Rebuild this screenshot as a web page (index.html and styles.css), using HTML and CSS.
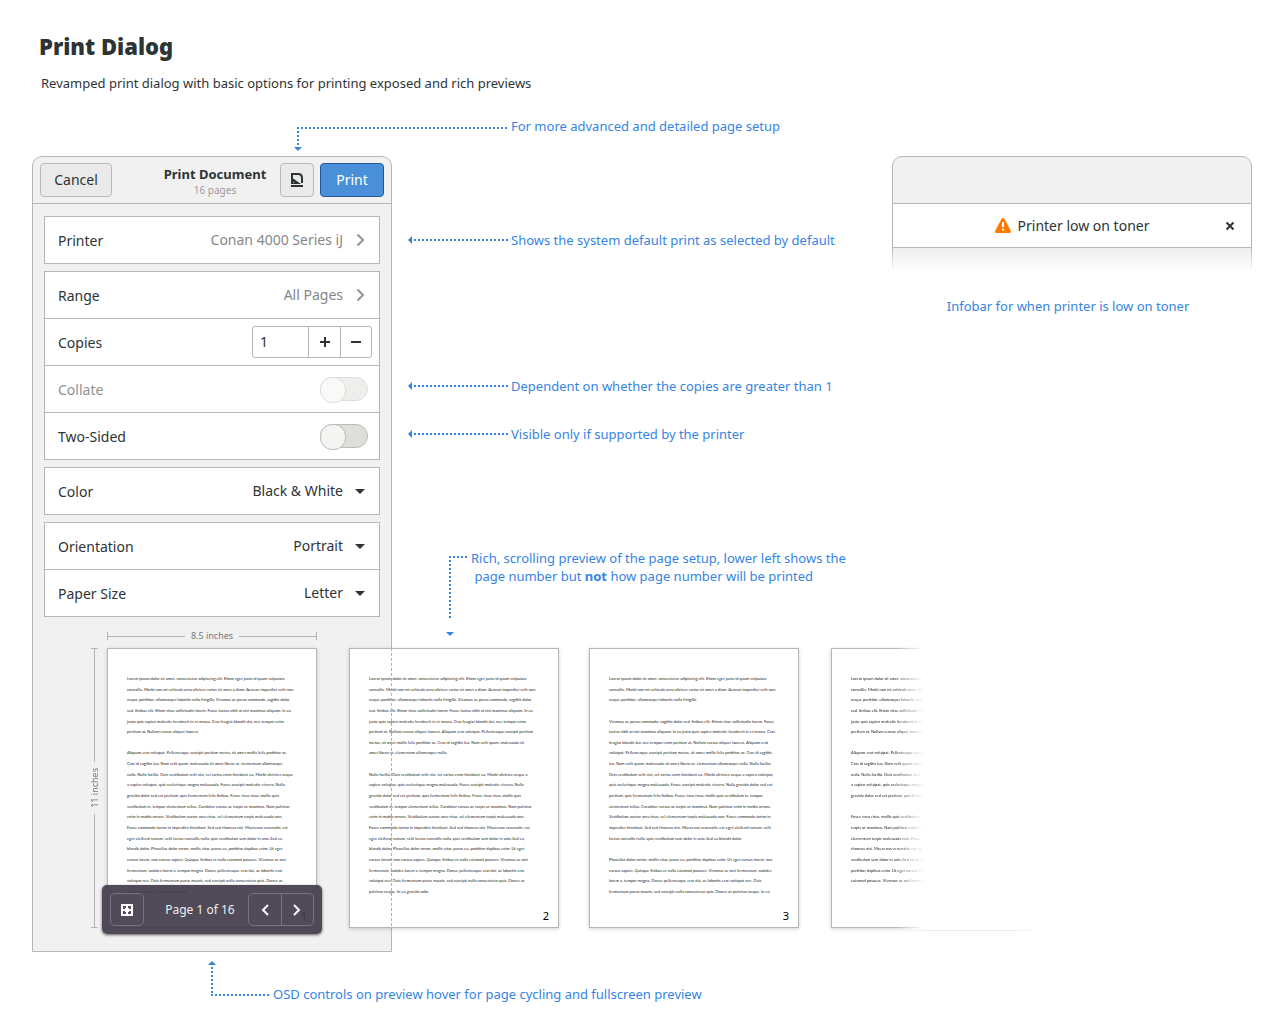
FILE: index.html
```html
<!DOCTYPE html>
<html lang="en">
<head>
<meta charset="utf-8">
<title>Print Dialog</title>
<link rel="stylesheet" href="styles.css">
</head>
<body>
<header class="intro">
  <h1 class="title">Print Dialog</h1>
  <p class="summary">Revamped print dialog with basic options for printing exposed and rich previews</p>
</header>

<div class="note note-top">
  <svg class="lead" width="214" height="26" viewBox="0 0 214 26"><path class="dots" d="M3 3H213M4 6V21"/><path class="tip" d="M0 22h8l-4 4z"/></svg>
  <p>For more advanced and detailed page setup</p>
</div>

<main class="board">
  <section class="dialog" aria-label="Print Document">
    <header class="bar">
      <button class="btn cancel" type="button">Cancel</button>
      <div class="heading">
        <h2>Print Document</h2>
        <p>16 pages</p>
      </div>
      <button class="btn setup" type="button" aria-label="Page setup">
        <svg width="16" height="16" viewBox="0 0 16 16"><path d="M3 6V2h6q4 0 4 4v5" fill="none" stroke="#2e3436" stroke-width="2"/><path d="M2 5l10 7H2zM2 13h12v2H2z" fill="#2e3436"/><path d="M4 9.500l1.500 1H4z" fill="#eaeaea"/></svg>
      </button>
      <button class="btn primary" type="button">Print</button>
    </header>

    <form class="options">
      <div class="group">
        <div class="row">
          <label for="printer">Printer</label>
          <button id="printer" class="link" type="button">Conan 4000 Series iJ
            <svg width="9" height="14" viewBox="0 0 9 14"><path d="M1.500 1.500L7 7l-5.500 5.500"/></svg></button>
        </div>
      </div>
      <div class="group">
        <div class="row">
          <label for="range">Range</label>
          <button id="range" class="link" type="button">All Pages
            <svg width="9" height="14" viewBox="0 0 9 14"><path d="M1.500 1.500L7 7l-5.500 5.500"/></svg></button>
        </div>
        <div class="row">
          <label for="copies">Copies</label>
          <div class="spin">
            <input id="copies" type="text" inputmode="numeric" value="1">
            <button type="button" aria-label="More copies"><svg width="10" height="10" viewBox="0 0 10 10"><path d="M4 0h2v4h4v2H6v4H4V6H0V4h4z"/></svg></button>
            <button type="button" aria-label="Fewer copies"><svg width="10" height="10" viewBox="0 0 10 10"><path d="M0 4h10v2H0z"/></svg></button>
          </div>
        </div>
        <div class="row off">
          <label for="collate">Collate</label>
          <input id="collate" class="switch" type="checkbox" disabled>
        </div>
        <div class="row">
          <label for="twosided">Two-Sided</label>
          <input id="twosided" class="switch" type="checkbox">
        </div>
      </div>
      <div class="group">
        <div class="row">
          <label for="color">Color</label>
          <div class="pick"><select id="color"><option>Black &amp; White</option><option>Color</option></select><svg width="10" height="5" viewBox="0 0 10 5"><path d="M0 0h10L5 5z"/></svg></div>
        </div>
      </div>
      <div class="group">
        <div class="row">
          <label for="orientation">Orientation</label>
          <div class="pick"><select id="orientation"><option>Portrait</option><option>Landscape</option></select><svg width="10" height="5" viewBox="0 0 10 5"><path d="M0 0h10L5 5z"/></svg></div>
        </div>
        <div class="row">
          <label for="paper">Paper Size</label>
          <div class="pick"><select id="paper"><option>Letter</option><option>A4</option></select><svg width="10" height="5" viewBox="0 0 10 5"><path d="M0 0h10L5 5z"/></svg></div>
        </div>
      </div>
    </form>

    <div class="preview">
      <div class="ruler wide"><span>8.5 inches</span></div>
      <div class="ruler tall"><span>11 inches</span></div>
      <div class="strip">
        <article class="page">
          <div class="copy">
            <span>Lorem ipsum dolor sit amet, consectetur adipiscing elit. Etiam eget justo id quam vulputate</span>
            <span>convallis. Morbi non mi vehicula urna ultrices varius sit amet a diam. Aenean imperdiet velit non</span>
            <span>neque porttitor, ullamcorper lobortis nulla fringilla. Vivamus ac purus commodo, sagittis dolor</span>
            <span>sed, finibus elit. Etiam vitae sollicitudin lorem. Fusce luctus nibh at nisi maximus aliquam. In eu</span>
            <span>justo quis sapien molestie hendrerit in et massa. Cras feugiat blandit dui, nec tempor enim</span>
            <span>pretium at. Nullam cursus aliquet laoreet.</span>
            <span></span>
            <span>Aliquam erat volutpat. Pellentesque suscipit pretium metus, sit amet mollis felis porttitor ac.</span>
            <span>Cras id sagittis leo. Nam velit quam, malesuada sit amet libero ut, elementum ullamcorper</span>
            <span>nulla. Nulla facilisi. Duis vestibulum velit nisi, vel varius enim tincidunt eu. Morbi ultricies neque</span>
            <span>a sapien volutpat, quis scelerisque magna malesuada. Fusce suscipit molestie viverra. Nulla</span>
            <span>gravida dolor sed est pretium, quis fermentum felis finibus. Fusce risus risus, mollis quis</span>
            <span>vestibulum in, tempor elementum tellus. Curabitur cursus ac turpis ut maximus. Nam pulvinar</span>
            <span>enim in mattis ornare. Vestibulum auctor arcu risus, vel elementum turpis malesuada non.</span>
            <span>Fusce commodo tortor in imperdiet tincidunt. Sed sed rhoncus nisi. Maecenas venenatis, est</span>
            <span>eget eleifend rutrum, velit lectus convallis nulla, quis vestibulum sem dolor in ante.Sed eu</span>
            <span>blandit dolor. Phasellus dolor tortor, mollis vitae purus eu, porttitor dapibus enim. Ut eget</span>
            <span>cursus lorem, non cursus sapien. Quisque finibus et nulla euismod posuere. Vivamus ac orci</span>
            <span>fermentum, sodales lorem a, tempor magna. Donec pellentesque erat dui, ac lobortis erat</span>
            <span>volutpat nec. Duis fermentum purus mauris, sed suscipit nulla consectetur quis. Donec ac</span>
            <span>pulvinar neque. In eu gravida odio.</span>
          </div>
          <p class="folio">1</p>
        </article>
        <article class="page">
          <div class="copy">
            <span>Lorem ipsum dolor sit amet, consectetur adipiscing elit. Etiam eget justo id quam vulputate</span>
            <span>convallis. Morbi non mi vehicula urna ultrices varius sit amet a diam. Aenean imperdiet velit non</span>
            <span>neque porttitor, ullamcorper lobortis nulla fringilla. Vivamus ac purus commodo, sagittis dolor</span>
            <span>sed, finibus elit. Etiam vitae sollicitudin lorem. Fusce luctus nibh at nisi maximus aliquam. In eu</span>
            <span>justo quis sapien molestie hendrerit in et massa. Cras feugiat blandit dui, nec tempor enim</span>
            <span>pretium at. Nullam cursus aliquet laoreet. Aliquam erat volutpat. Pellentesque suscipit pretium</span>
            <span>metus, sit amet mollis felis porttitor ac. Cras id sagittis leo. Nam velit quam, malesuada sit</span>
            <span>amet libero ut, elementum ullamcorper nulla.</span>
            <span></span>
            <span>Nulla facilisi. Duis vestibulum velit nisi, vel varius enim tincidunt eu. Morbi ultricies neque a</span>
            <span>sapien volutpat, quis scelerisque magna malesuada. Fusce suscipit molestie viverra. Nulla</span>
            <span>gravida dolor sed est pretium, quis fermentum felis finibus. Fusce risus risus, mollis quis</span>
            <span>vestibulum in, tempor elementum tellus. Curabitur cursus ac turpis ut maximus. Nam pulvinar</span>
            <span>enim in mattis ornare. Vestibulum auctor arcu risus, vel elementum turpis malesuada non.</span>
            <span>Fusce commodo tortor in imperdiet tincidunt. Sed sed rhoncus nisi. Maecenas venenatis, est</span>
            <span>eget eleifend rutrum, velit lectus convallis nulla, quis vestibulum sem dolor in ante.Sed eu</span>
            <span>blandit dolor. Phasellus dolor tortor, mollis vitae purus eu, porttitor dapibus enim. Ut eget</span>
            <span>cursus lorem, non cursus sapien. Quisque finibus et nulla euismod posuere. Vivamus ac orci</span>
            <span>fermentum, sodales lorem a, tempor magna. Donec pellentesque erat dui, ac lobortis erat</span>
            <span>volutpat nec. Duis fermentum purus mauris, sed suscipit nulla consectetur quis. Donec ac</span>
            <span>pulvinar neque. In eu gravida odio.</span>
          </div>
          <p class="folio">2</p>
        </article>
        <article class="page">
          <div class="copy">
            <span>Lorem ipsum dolor sit amet, consectetur adipiscing elit. Etiam eget justo id quam vulputate</span>
            <span>convallis. Morbi non mi vehicula urna ultrices varius sit amet a diam. Aenean imperdiet velit non</span>
            <span>neque porttitor, ullamcorper lobortis nulla fringilla.</span>
            <span></span>
            <span>Vivamus ac purus commodo, sagittis dolor sed, finibus elit. Etiam vitae sollicitudin lorem. Fusce</span>
            <span>luctus nibh at nisi maximus aliquam. In eu justo quis sapien molestie hendrerit in et massa. Cras</span>
            <span>feugiat blandit dui, nec tempor enim pretium at. Nullam cursus aliquet laoreet. Aliquam erat</span>
            <span>volutpat. Pellentesque suscipit pretium metus, sit amet mollis felis porttitor ac. Cras id sagittis</span>
            <span>leo. Nam velit quam, malesuada sit amet libero ut, elementum ullamcorper nulla. Nulla facilisi.</span>
            <span>Duis vestibulum velit nisi, vel varius enim tincidunt eu. Morbi ultricies neque a sapien volutpat,</span>
            <span>quis scelerisque magna malesuada. Fusce suscipit molestie viverra. Nulla gravida dolor sed est</span>
            <span>pretium, quis fermentum felis finibus. Fusce risus risus, mollis quis vestibulum in, tempor</span>
            <span>elementum tellus. Curabitur cursus ac turpis ut maximus. Nam pulvinar enim in mattis ornare.</span>
            <span>Vestibulum auctor arcu risus, vel elementum turpis malesuada non. Fusce commodo tortor in</span>
            <span>imperdiet tincidunt. Sed sed rhoncus nisi. Maecenas venenatis, est eget eleifend rutrum, velit</span>
            <span>lectus convallis nulla, quis vestibulum sem dolor in ante.Sed eu blandit dolor.</span>
            <span></span>
            <span>Phasellus dolor tortor, mollis vitae purus eu, porttitor dapibus enim. Ut eget cursus lorem, non</span>
            <span>cursus sapien. Quisque finibus et nulla euismod posuere. Vivamus ac orci fermentum, sodales</span>
            <span>lorem a, tempor magna. Donec pellentesque erat dui, ac lobortis erat volutpat nec. Duis</span>
            <span>fermentum purus mauris, sed suscipit nulla consectetur quis. Donec ac pulvinar neque. In eu</span>
          </div>
          <p class="folio">3</p>
        </article>
        <div class="fading">
        <article class="page">
          <div class="copy">
            <span>Lorem ipsum dolor sit amet, consectetur</span>
            <span>convallis. Morbi non mi vehicula urna ultrices</span>
            <span>neque porttitor, ullamcorper lobortis nulla</span>
            <span>sed, finibus elit. Etiam vitae sollicitudin lorem.</span>
            <span>justo quis sapien molestie hendrerit in et massa.</span>
            <span>pretium at. Nullam cursus aliquet laoreet.</span>
            <span></span>
            <span>Aliquam erat volutpat. Pellentesque suscipit</span>
            <span>Cras id sagittis leo. Nam velit quam, malesuada</span>
            <span>nulla. Nulla facilisi. Duis vestibulum velit nisi,</span>
            <span>a sapien volutpat, quis scelerisque magna</span>
            <span>gravida dolor sed est pretium, quis fermentum</span>
            <span></span>
            <span>Fusce risus risus, mollis quis vestibulum in,</span>
            <span>turpis ut maximus. Nam pulvinar enim in mattis</span>
            <span>elementum turpis malesuada non. Fusce</span>
            <span>rhoncus nisi. Maecenas venenatis, est eget</span>
            <span>vestibulum sem dolor in ante.Sed eu blandit</span>
            <span>porttitor dapibus enim. Ut eget cursus lorem,</span>
            <span>euismod posuere. Vivamus ac orci fermentum,</span>
            <span></span>
          </div>
        </article>
        </div>
      </div>
      <div class="osd">
        <button class="osd-btn" type="button" aria-label="Fullscreen preview"><svg width="12" height="12" viewBox="0 0 12 12"><path fill-rule="evenodd" d="M0 0h12v12H0zM2 2v3h2V4h1V2zM7 2v2h1v1h2V2zM2 7v3h3V8H4V7zM8 7v1H7v2h3V7z"/></svg></button>
        <p>Page 1 of 16</p>
        <div class="osd-pair">
          <button type="button" aria-label="Previous page"><svg width="8" height="12" viewBox="0 0 8 12"><path class="arrow" d="M7 1L2 6l5 5"/></svg></button>
          <button type="button" aria-label="Next page"><svg width="8" height="12" viewBox="0 0 8 12"><path class="arrow" d="M1 1l5 5-5 5"/></svg></button>
        </div>
      </div>
    </div>
  </section>

  <section class="notes" aria-label="Notes">
    <div class="note">
      <svg class="lead" width="100" height="8" viewBox="0 0 100 8"><path class="dots" d="M6 4H100"/><path class="tip" d="M4 0v8l-4-4z"/></svg>
      <p>Shows the system default print as selected by default</p>
    </div>
    <div class="note">
      <svg class="lead" width="100" height="8" viewBox="0 0 100 8"><path class="dots" d="M6 4H100"/><path class="tip" d="M4 0v8l-4-4z"/></svg>
      <p>Dependent on whether the copies are greater than 1</p>
    </div>
    <div class="note">
      <svg class="lead" width="100" height="8" viewBox="0 0 100 8"><path class="dots" d="M6 4H100"/><path class="tip" d="M4 0v8l-4-4z"/></svg>
      <p>Visible only if supported by the printer</p>
    </div>
    <div class="note note-rich">
      <svg class="lead" width="22" height="81" viewBox="0 0 22 81"><path class="dots" d="M3 2H22M4 5V63"/><path class="tip" d="M0 77h8l-4 4z"/></svg>
      <p>Rich, scrolling preview of the page setup, lower left shows the<br>&nbsp;page number but <b>not</b> how page number will be printed</p>
    </div>
  </section>

  <section class="aside">
    <div class="infobar">
      <div class="infobar-head"></div>
      <div class="infobar-body" role="alert">
        <p class="alert"><svg width="16" height="15" viewBox="0 0 16 15"><path fill="#ff7800" d="M8 0q1 0 1.500 1l6.200 11.500Q16.500 15 14.500 15h-13Q-.5 15 .3 12.500L6.500 1Q7 0 8 0z"/><path fill="#fff" d="M7 4h2v5H7zM7 10.500h2v2H7z"/></svg>Printer low on toner</p>
        <button type="button" aria-label="Dismiss"><svg width="10" height="10" viewBox="0 0 10 10"><path d="M1.500 1.500l7 7M8.500 1.500l-7 7"/></svg></button>
      </div>
      <div class="infobar-fade"></div>
    </div>
    <p class="caption">Infobar for when printer is low on toner</p>
  </section>
</main>

<div class="note note-osd">
  <svg class="lead" width="62" height="37" viewBox="0 0 62 37"><path class="dots" d="M4 6V34M3 34H62"/><path class="tip" d="M0 4h8L4 0z"/></svg>
  <p>OSD controls on preview hover for page cycling and fullscreen preview</p>
</div>
</body>
</html>
```
FILE: styles.css
```css
* { box-sizing: border-box; }

body {
  margin: 0;
  background: #fff;
  color: #2e3436;
  font: 14px/20px "Noto Sans", "Open Sans", sans-serif;
}

h1, h2, p { margin: 0; }

button, input, select {
  margin: 0;
  padding: 0;
  border: 0;
  background: none;
  color: inherit;
  font: inherit;
}

/* Intro */
.intro { padding: 31px 39px 0; }
.title { font-size: 22px; line-height: 30px; font-weight: 900; }
.summary { padding: 12px 2px 1px; font-size: 13px; }

/* Blue annotations */
.note { display: flex; gap: 3px; color: #3584e4; font-size: 13px; }
.note p { white-space: nowrap; }
.lead { flex: none; }
.dots { fill: none; stroke: #3584e4; stroke-width: 2; stroke-dasharray: 2 2; }
.tip { fill: #3584e4; }
.note-top { height: 40px; margin-top: 22px; padding-left: 294px; }
.note-top .lead { margin-top: 9px; }
.note-osd { padding: 9px 0 24px 208px; }
.note-osd p { padding-top: 23px; }

.board {
  display: grid;
  grid-template-columns: 360px minmax(0, 1fr) 360px;
  padding: 0 28px 0 32px;
}

.notes {
  display: grid;
  grid-template-rows: 146px 48px 125px auto;
  align-items: start;
  padding: 74px 0 0 16px;
}
.notes .lead { margin-top: 6px; }
.note-rich { padding-left: 38px; line-height: 18px; }

/* Dialog window */
.dialog {
  border: 1px solid #b6b6b6;
  border-radius: 10px 10px 0 0;
  background: #f1f1f1;
}
.bar {
  display: flex;
  align-items: center;
  height: 47px;
  padding: 0 7px;
  border-bottom: 1px solid #b6b6b6;
}
.heading { flex: 1; padding: 2px 0 0 44px; text-align: center; }
.heading h2 { font-size: 13px; line-height: 18px; font-weight: 700; }
.heading p { color: #9a9c9c; font-size: 10px; line-height: 14px; }
.btn {
  display: grid;
  place-items: center;
  height: 34px;
  border: 1px solid #b9b9b9;
  border-radius: 4px;
  background: #eaeaea;
}
.cancel { width: 72px; }
.setup { width: 34px; margin: 0 6px; }
.primary { width: 64px; border-color: #1f5899; background: #4a90d9; color: #fff; }

.options { display: grid; gap: 7px; padding: 12px 11px 0; }
.group { border: 1px solid #b6b6b6; background: #fff; }
.row {
  display: flex;
  align-items: center;
  justify-content: space-between;
  height: 46px;
  padding: 0 13px;
}
.row + .row { height: 47px; border-top: 1px solid #b6b6b6; }
.row label { padding-top: 2px; }
.row.off label { color: #8e9192; }
.link { display: flex; align-items: center; gap: 13px; padding-right: 1px; color: #858788; }
.link path { fill: none; stroke: #929595; stroke-width: 2; }

.spin {
  display: flex;
  height: 32px;
  margin-right: -6px;
  border: 1px solid #b6b6b6;
  border-radius: 3px;
}
.spin input { width: 55px; padding-left: 7px; }
.spin button { width: 32px; border-left: 1px solid #b6b6b6; }
.spin button + button { width: 31px; }
.spin svg { fill: #2e3436; }

.switch {
  appearance: none;
  width: 48px;
  height: 24px;
  margin-right: -2px;
  border: 1px solid #bcbcb9;
  border-radius: 12px;
  background: #dededa;
}
.switch::before {
  content: "";
  display: block;
  width: 24px;
  height: 24px;
  margin: -1px;
  border: 1px solid #bcbcb9;
  border-radius: 12px;
  background: #f4f4f2;
}
.switch:disabled { opacity: 0.5; }

.pick { display: flex; align-items: center; gap: 12px; padding-right: 1px; }
.pick select { appearance: none; text-align: right; text-align-last: right; }
.pick svg { fill: #2e3436; }

/* Preview strip */
.preview {
  position: relative;
  display: grid;
  grid-template-columns: 7px 210px;
  grid-template-rows: 8px 280px;
  gap: 8px 9px;
  padding: 15px 0 23px 58px;
}
.preview::after {
  content: "";
  position: absolute;
  top: 31px;
  right: -1px;
  width: 1px;
  height: 280px;
  background: repeating-linear-gradient(#b0b0b0 0 3px, transparent 3px 5px);
}
.ruler {
  display: flex;
  align-items: center;
  gap: 6px;
  color: #77797a;
  font-size: 9px;
  line-height: 8px;
}
.ruler::before, .ruler::after { content: ""; flex: 1; }
.wide { grid-column: 2; border: solid #b6b6b6; border-width: 0 1px; }
.wide::before, .wide::after { height: 1px; background: #b6b6b6; }
.wide::after { flex-grow: 1; }
.tall {
  flex-direction: column;
  border: solid #b6b6b6;
  border-width: 1px 0;
}
.tall::before, .tall::after { width: 1px; background: #b6b6b6; }
.tall span { writing-mode: vertical-rl; rotate: 180deg; }

.strip {
  position: relative;
  display: grid;
  grid-template-columns: 242px 240px 242px 210px;
  width: 934px;
}
/* Trailing shadow where the strip runs out */
.strip::after {
  content: "";
  position: absolute;
  top: 282px;
  right: 0;
  width: 140px;
  height: 1px;
  background: linear-gradient(to right, transparent, #ebebeb 30px 110px, transparent);
}
.page {
  display: flex;
  flex-direction: column;
  justify-content: space-between;
  width: 210px;
  height: 280px;
  padding: 26px 9px 3px 19px;
  border: 1px solid #b6b6b6;
  background: #fff;
  box-shadow: 0 1px 4px rgba(0, 0, 0, 0.18);
}
.copy {
  display: flex;
  flex-direction: column;
  justify-content: space-between;
  height: 221px;
  color: #222;
  font-family: Lato, "Noto Sans", sans-serif;
  font-size: 4px;
  line-height: 8px;
  white-space: nowrap;
}
.copy span { height: 8px; }
.folio { color: #000; font-size: 11px; line-height: 16px; text-align: right; }
.fading {
  margin: -8px;
  padding: 8px;
  overflow: hidden;
  mask-image: linear-gradient(to right, #000 72px, transparent 101px);
}

/* On-screen controls over the first page */
.osd {
  position: absolute;
  left: 69px;
  bottom: 17px;
  display: flex;
  align-items: center;
  justify-content: space-between;
  width: 220px;
  height: 49px;
  padding: 0 8px;
  border-radius: 5px;
  background: rgba(65, 59, 75, 0.92);
  box-shadow: 0 1px 3px rgba(0, 0, 0, 0.6);
  color: #eeeeec;
}
.osd p { font-size: 12px; padding-left: 8px; }
.osd-btn, .osd-pair { height: 33px; border: 1px solid #77737e; border-radius: 5px; }
.osd-btn { width: 34px; }
.osd-pair { display: flex; }
.osd-pair button { width: 32px; }
.osd-pair button + button { border-left: 1px solid #77737e; }
.osd svg { display: block; margin: 0 auto; fill: #fff; }
.osd .arrow { fill: none; stroke: #fff; stroke-width: 2; }

/* Infobar window */
.infobar-head {
  height: 48px;
  border: 1px solid #b6b6b6;
  border-radius: 10px 10px 0 0;
  background: #f1f1f1;
}
.infobar-body {
  display: flex;
  align-items: center;
  height: 44px;
  padding: 0 16px;
  border: solid #b6b6b6;
  border-width: 0 1px 1px;
}
.alert {
  display: flex;
  flex: 1;
  align-items: center;
  justify-content: center;
  gap: 7px;
  padding-left: 10px;
}
.infobar-body button svg { display: block; fill: none; stroke: #2e3436; stroke-width: 2; }
.infobar-fade {
  height: 24px;
  border: solid #b6b6b6;
  border-width: 0 1px;
  background: #eee;
  mask-image: linear-gradient(#000, transparent);
}
.caption { padding: 24px 8px 0 0; color: #3584e4; font-size: 13px; text-align: center; }
```
